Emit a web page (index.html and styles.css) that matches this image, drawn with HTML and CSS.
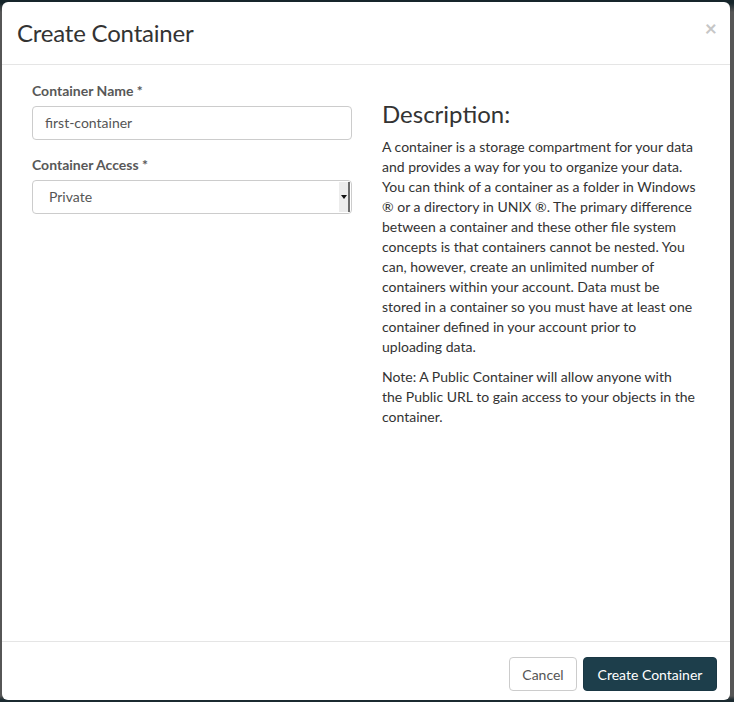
FILE: index.html
```html
<!DOCTYPE html>
<html lang="en">
<head>
<meta charset="utf-8">
<title>Create Container</title>
<link rel="stylesheet" href="styles.css">
</head>
<body>
<div class="modal">
  <div class="modal-header">
    <h4 class="modal-title">Create Container</h4>
    <button class="close" type="button">×</button>
  </div>
  <div class="modal-body">
    <div class="col-form">
      <div class="form-group">
        <label class="label">Container Name *</label>
        <div class="input">first-container</div>
      </div>
      <div class="form-group">
        <label class="label">Container Access *</label>
        <div class="select">
          <span class="select-value">Private</span>
          <span class="select-arrow"><span class="caret"></span></span>
        </div>
      </div>
    </div>
    <div class="col-desc">
      <h3 class="desc-title">Description:</h3>
      <p class="desc-text">A container is a storage compartment for your data and provides a way for you to organize your data. You can think of a container as a folder in Windows ® or a directory in UNIX ®. The primary difference between a container and these other file system concepts is that containers cannot be nested. You can, however, create an unlimited number of containers within your account. Data must be stored in a container so you must have at least one container defined in your account prior to uploading data.</p>
      <p class="desc-text">Note: A Public Container will allow anyone with<br>the Public URL to gain access to your objects in the container.</p>
    </div>
  </div>
  <div class="modal-footer">
    <button class="btn btn-default" type="button">Cancel</button>
    <button class="btn btn-primary" type="button">Create Container</button>
  </div>
</div>
</body>
</html>
```

FILE: styles.css
```css
* { box-sizing: border-box; }
html, body { margin: 0; padding: 0; }
body {
  width: 734px;
  height: 702px;
  overflow: hidden;
  background: linear-gradient(to bottom, #16252b 0px, #16252b 3px, #565656 12px, #565656 696px, #1b2a30 700px);
  padding: 2px 4px 2px 2px;
  font-family: Lato, "Open Sans", sans-serif;
  color: #333;
}
.modal {
  width: 728px;
  height: 698px;
  background: #fff;
  border-radius: 6px;
  display: flex;
  flex-direction: column;
}
.modal-header {
  position: relative;
  height: 63px;
  border-bottom: 1px solid #e5e5e5;
  padding: 16px 16px 0 15px;
}
.modal-title {
  margin: 0;
  font-size: 24px;
  line-height: 30px;
  font-weight: 400;
  letter-spacing: -0.2px;
  color: #333;
}
.close {
  position: absolute;
  right: 13px;
  top: 15px;
  border: 0;
  background: none;
  padding: 0;
  font-family: Lato, sans-serif;
  font-size: 21px;
  font-weight: 700;
  line-height: 1;
  color: #c6c6c6;
}
.modal-body {
  flex: 1;
  display: grid;
  grid-template-columns: 320px 316px;
  column-gap: 30px;
  padding: 16px 0 0 30px;
  align-content: start;
}
.form-group { margin-bottom: 15px; }
.label {
  display: block;
  font-size: 14px;
  line-height: 20px;
  font-weight: 700;
  color: #585858;
  margin-bottom: 5px;
}
.input, .select {
  height: 34px;
  border: 1px solid #ccc;
  border-radius: 4px;
  font-size: 14px;
  line-height: 32px;
  color: #555;
}
.input { padding: 0 12px; }
.select {
  position: relative;
  padding: 0 16px;
}
.select-arrow {
  position: absolute;
  right: 1px;
  top: 1px;
  width: 11px;
  height: 30px;
  background: #ececec;
  border-right: 2px solid #6b6b6b;
  display: flex;
  align-items: center;
  justify-content: center;
}
.caret {
  width: 0;
  height: 0;
  border-left: 3px solid transparent;
  border-right: 3px solid transparent;
  border-top: 4px solid #111;
}
.desc-title {
  margin: 20px 0 10px;
  font-size: 24px;
  line-height: 26px;
  font-weight: 400;
  color: #333;
}
.desc-text {
  margin: 0 0 10px;
  font-size: 14px;
  line-height: 20px;
  color: #333;
}
.modal-footer {
  height: 59px;
  border-top: 1px solid #e5e5e5;
  padding: 15px 13px 0 0;
  display: flex;
  justify-content: flex-end;
  align-items: flex-start;
  gap: 6px;
}
.btn {
  height: 34px;
  border-radius: 4px;
  font-family: Lato, sans-serif;
  font-size: 14px;
  padding: 0 12px;
  border: 1px solid transparent;
}
.btn-default {
  background: #fff;
  border-color: #ccc;
  color: #555;
  width: 68px;
}
.btn-primary {
  background: #1d3e4b;
  border-color: #1a3744;
  color: #fff;
  width: 134px;
}
```
